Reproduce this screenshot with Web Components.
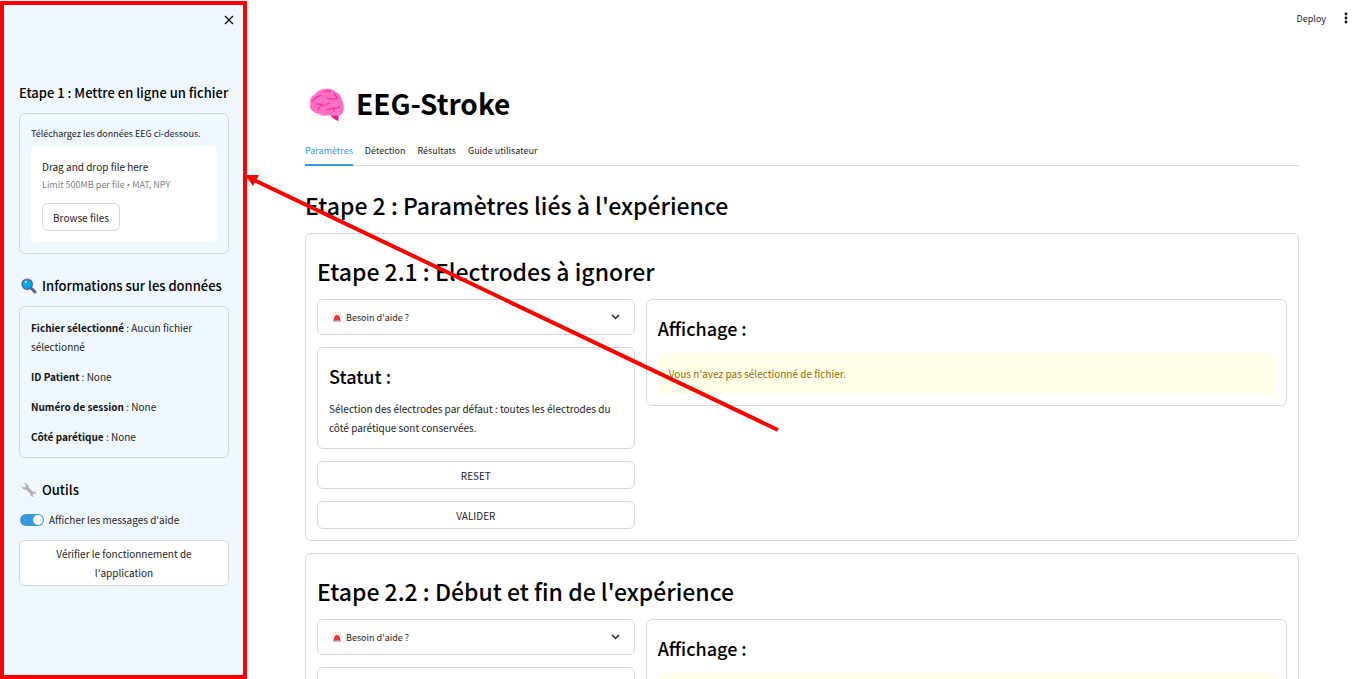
<!DOCTYPE html>
<html lang="fr">
<head>
<meta charset="utf-8">
<title>EEG-Stroke</title>
<style>
html, body { margin: 0; height: 100%; }
body { font-family: "Noto Sans CJK SC", "Noto Sans", sans-serif; font-size: 10px; line-height: 19px; color: #31333f; background: #fff; overflow: hidden; }
</style>
</head>
<body>
<eeg-app></eeg-app>
<script>
const base = `
  *, *::before, *::after { box-sizing: border-box; }
  h1, h2, h3, h4, p { margin: 0; color: #000; font-weight: 500; }
  p { color: #222; font-weight: 400; }
  button { font: inherit; color: #222; cursor: pointer; }
  svg { display: block; flex: none; }
`;
function define(name, css, html) {
  const template = document.createElement('template');
  template.innerHTML = `<style>${base}${css}</style>${html}`;
  customElements.define(name, class extends HTMLElement {
    constructor() {
      super();
      this.attachShadow({ mode: 'open' }).appendChild(template.content.cloneNode(true));
    }
  });
}

define('icon-brain', ':host { display: block; }', `
<svg width="36" height="36" viewBox="0 0 36 36" aria-hidden="true">
  <path d="M22 27h7.500v7c-2.600-.6-5.500-2.600-7.500-5z" fill="#f7158f"/>
  <path d="M4.500 24.500C1 23 .8 19.500 1.200 17 .5 12 3 8.500 6.500 7 8.500 3.500 13 1.800 17 2c3.500-.8 7 .2 9 2.500 4 1.500 6.500 4.500 7 8.500 2 4 2.200 8.500 1.400 11.500C33.500 27.500 31 29 27.500 28.600c-4 .4-7-.4-9.500 0-4 .6-6-.1-7.500-1.600-2.500.2-4.500-.7-6-2.500z" fill="#ff6fc4"/>
  <g fill="none" stroke="#f7259b" stroke-width="1.100" stroke-linecap="round">
    <path d="M3 14C6 12.500 7 9 11.500 8.500M15 4.500c2-.8 4-.8 6.500.3M18 11c2.500 1.500 6 1 9.500.8M25 7c1.500 1 2.500 2.500 3 4.500"/>
    <path d="M8 17c2.500-.5 4.500.5 6 1.500 3-.2 4.500-1.500 6-2.500M12 19c-1.500.5-2.500 2-3 4M17 23c3-.5 5-2 9-1.800 2 .2 3.500-.4 4.500-1.500M24 21.300l1.500 2.500"/>
  </g>
</svg>`);

define('icon-search', ':host { display: block; }', `
<svg width="16" height="16" viewBox="0 0 16 16" aria-hidden="true">
  <path d="M10 10l4 4" stroke="#635994" stroke-width="3" stroke-linecap="round"/>
  <circle cx="6.200" cy="6.200" r="5.200" fill="#00a6ed" stroke="#635994" stroke-width="1.200"/>
  <ellipse cx="4.800" cy="4" rx="1.400" ry="1" fill="#aee6fb" transform="rotate(-35 4.800 4)"/>
</svg>`);

define('icon-wrench', ':host { display: block; }', `
<svg width="16" height="16" viewBox="0 0 16 16" aria-hidden="true">
  <path d="M2.800 1.200L5 3.300 4.400 5.200 2.700 5.500.9 3.900C.6 6.200 2.600 8 5 7.500l4.300 3.900c-.2 2 1.200 3.600 3.400 3.600l-1.100-1.700.5-1.500 1.600-.3 1.600 1.300c.3-2.100-1.500-3.700-3.700-3.300L7.500 5.300C7.800 2.900 5.500.7 2.800 1.200z" fill="#b4acbc"/>
</svg>`);

define('icon-siren', ':host { display: block; }', `
<svg width="10" height="12" viewBox="0 0 10 12" aria-hidden="true">
  <path d="M1 3l1.400 1M9 3L7.600 4M3 .8l.5 1.500M7 .8l-.5 1.500" stroke="#ffc83d" stroke-width="1"/>
  <path d="M1 9h8v2H1z" fill="#c9c5cf"/>
  <path d="M1.300 9.500l1.300-4C2.900 4.400 3.600 3.900 5 3.900s2.100.5 2.400 1.600l1.300 4z" fill="#f8312f"/>
</svg>`);

define('ui-card', `
  :host { display: flex; flex-direction: column; border: 1px solid #d6d7dc; border-radius: 6px; padding: 11px; box-sizing: border-box; }
`, `<slot></slot>`);

define('ui-button', `
  :host { display: block; }
  button { display: block; width: 100%; min-height: 28px; padding: 3px 9px; border: 1px solid #d6d7dc; border-radius: 6px; background: #fff; }
`, `<button type="button"><slot></slot></button>`);

define('ui-expander', `
  :host { display: block; }
  details { border: 1px solid #d6d7dc; border-radius: 6px; }
  summary { display: flex; align-items: center; height: 34px; padding: 0 14px; gap: 4px; list-style: none; font-size: 9px; color: #222; cursor: pointer; }
  summary svg { margin-left: auto; }
`, `<details><summary><icon-siren></icon-siren><span>Besoin d'aide ?</span>
  <svg width="9" height="6" viewBox="0 0 9 6" aria-hidden="true"><path d="M1 1l3.500 3.500L8 1" fill="none" stroke="#222" stroke-width="1.500"/></svg>
</summary></details>`);

define('file-drop', `
  :host { display: block; }
  label { display: block; font-size: 9px; line-height: 17px; color: #222; }
  .zone { margin-top: 4px; padding: 11px; border-radius: 6px; background: #fff; }
  .limit { font-size: 9px; line-height: 17px; color: #808189; }
  .limit span { font-family: "Open Sans", sans-serif; }
  ui-button { width: 78px; margin-top: 10px; white-space: nowrap; }
  input { display: none; }
`, `<label for="file">Téléchargez les données EEG ci-dessous.</label>
<div class="zone"><p>Drag and drop file here</p><p class="limit">Limit 500MB per file <span>•</span> MAT, NPY</p>
<input id="file" type="file" accept=".mat,.npy"><ui-button>Browse files</ui-button></div>`);

define('ui-toggle', `
  :host { display: block; }
  label { display: flex; align-items: center; gap: 5px; padding-left: 1px; color: #222; }
  input { appearance: none; flex: none; margin: 0; width: 24px; height: 12px; border-radius: 6px; background: #c4c7ce; display: flex; align-items: center; padding: 0 1px; }
  input::before { content: ""; width: 10px; height: 10px; border-radius: 50%; background: #fff; }
  input:checked { background: #3498db; justify-content: flex-end; }
`, `<label><input type="checkbox" role="switch" checked><slot></slot></label>`);

define('side-bar', `
  :host { display: block; background: #f0f8ff; padding: 0 16px 0 19px; overflow: hidden; }
  .top { display: flex; justify-content: flex-end; height: 80px; padding-top: 12px; margin-right: -8px; }
  .close { width: 16px; height: 16px; padding: 3px; border: 0; background: none; }
  h3 { display: flex; align-items: center; gap: 5px; font-size: 13px; line-height: 26px; white-space: nowrap; }
  h3 > * { margin-left: 2px; }
  ui-card { margin-top: 7px; }
  .info { gap: 11px; }
  .info b { font-weight: 700; color: #111; }
  .space { margin-top: 19px; }
  ui-toggle { margin-top: 7px; }
  ui-button { margin-top: 11px; }
`, `<div class="top"><button class="close" type="button" aria-label="Fermer"><svg width="10" height="10" viewBox="0 0 10 10"><path d="M1 1l8 8M9 1L1 9" stroke="#111" stroke-width="1.400"/></svg></button></div>
<h3>Etape 1 : Mettre en ligne un fichier</h3>
<ui-card><file-drop></file-drop></ui-card>
<h3 class="space"><icon-search></icon-search>Informations sur les données</h3>
<ui-card class="info"><p><b>Fichier sélectionné</b> : Aucun fichier sélectionné</p><p><b>ID Patient</b> : None</p><p><b>Numéro de session</b> : None</p><p><b>Côté parétique</b> : None</p></ui-card>
<h3 class="space"><icon-wrench></icon-wrench>Outils</h3>
<ui-toggle>Afficher les messages d'aide</ui-toggle>
<ui-button>Vérifier le fonctionnement de l'application</ui-button>`);

define('step-panel', `
  :host { display: block; margin-top: 12px; }
  h2 { font-size: 23px; line-height: 32px; padding: 10px 0 12px; }
  h3 { font-size: 18px; line-height: 24px; padding: 5px 0 8px; }
  .cols { display: grid; grid-template-columns: minmax(0, 318fr) minmax(0, 642fr); gap: 11px; align-items: start; }
  .left { display: flex; flex-direction: column; gap: 12px; }
  .alert { margin-top: 5px; padding: 11px; border-radius: 6px; background: #fffce7; color: #926c05; }
  .status p { margin-top: 3px; }
`, `<ui-card><h2><slot></slot></h2><div class="cols">
<div class="left"><ui-expander></ui-expander>
<ui-card class="status"><h3>Statut :</h3><p><slot name="status"></slot></p></ui-card>
<ui-button>RESET</ui-button><ui-button>VALIDER</ui-button></div>
<ui-card><h3>Affichage :</h3><p class="alert" role="alert">Vous n'avez pas sélectionné de fichier.</p></ui-card>
</div></ui-card>`);

define('tab-bar', `
  :host { display: flex; gap: 12px; box-shadow: inset 0 -1px #d9dade; }
  button { height: 30px; padding: 1px 0 0; border: 0; border-bottom: 2px solid transparent; background: none; font-size: 9px; }
  button[aria-selected=true] { color: #3498db; border-color: #3498db; }
`, `<button type="button" role="tab" aria-selected="true">Paramètres</button><button type="button" role="tab">Détection</button><button type="button" role="tab">Résultats</button><button type="button" role="tab">Guide utilisateur</button>`);

define('top-bar', `
  :host { display: flex; justify-content: flex-end; align-items: center; gap: 14px; height: 36px; padding-right: 10px; }
  button { border: 0; padding: 0; background: none; font-size: 9px; }
`, `<button type="button">Deploy</button><button type="button" aria-label="Menu"><svg width="12" height="12" viewBox="0 0 12 12" fill="#111"><circle cx="6" cy="2" r="1.400"/><circle cx="6" cy="6" r="1.400"/><circle cx="6" cy="10" r="1.400"/></svg></button>`);

define('note-overlay', `
  :host { position: absolute; inset: 0; pointer-events: none; }
  .frame { position: absolute; inset: 1px auto 0 0; width: 247px; border: 4px solid #f00; }
  svg { position: absolute; inset: 0; }
`, `<div class="frame"></div><svg width="800" height="440" aria-hidden="true"><path d="M254 180L778 430" stroke="#f00" stroke-width="4"/><path d="M245 175l14 0-6 11z" fill="#f00"/></svg>`);

define('eeg-app', `
  :host { position: relative; display: grid; grid-template-columns: 245px 1fr; height: 100vh; overflow: hidden; }
  main { min-width: 0; overflow-y: auto; scrollbar-width: none; }
  .page { padding: 44px 63px 40px 60px; }
  header { display: flex; align-items: center; gap: 11px; height: 50px; padding-left: 4px; }
  h1 { font-size: 28px; line-height: 44px; padding-bottom: 4px; font-weight: 700; }
  tab-bar { margin-top: 6px; }
  h2 { font-size: 23px; line-height: 32px; margin-top: 23px; }
`, `<side-bar></side-bar>
<main><top-bar></top-bar><div class="page">
<header><icon-brain></icon-brain><h1>EEG-Stroke</h1></header>
<tab-bar role="tablist"></tab-bar>
<h2>Etape 2 : Paramètres liés à l'expérience</h2>
<step-panel>Etape 2.1 : Electrodes à ignorer<span slot="status">Sélection des électrodes par défaut : toutes les électrodes du côté parétique sont conservées.</span></step-panel>
<step-panel>Etape 2.2 : Début et fin de l'expérience<span slot="status">Sélection par défaut : toute la durée de l'expérience est conservée.</span></step-panel>
</div></main><note-overlay></note-overlay>`);
</script>
</body>
</html>
